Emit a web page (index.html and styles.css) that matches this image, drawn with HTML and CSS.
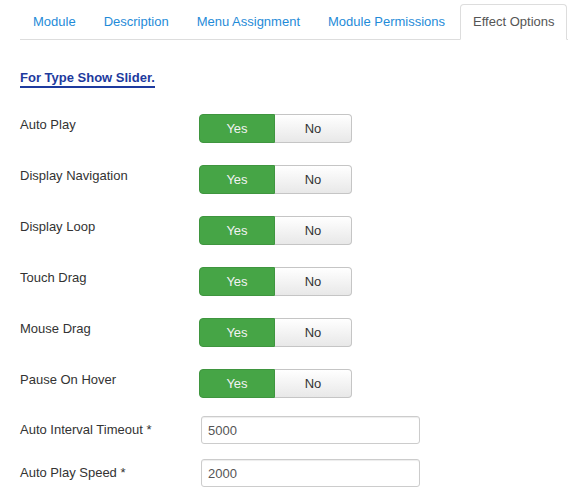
FILE: index.html
```
<!DOCTYPE html>
<html lang="en">
<head>
    <meta charset="UTF-8">
    <meta name="viewport" content="width=device-width, initial-scale=1.0">
    <title>Effect Options</title>
    <link rel="stylesheet" href="styles.css">
</head>
<body>
    <div class="container">
        <!-- Tabs -->
        <ul class="nav-tabs">
            <li><a href="#">Module</a></li>
            <li><a href="#">Description</a></li>
            <li><a href="#">Menu Assignment</a></li>
            <li><a href="#">Module Permissions</a></li>
            <li class="active"><a href="#">Effect Options</a></li>
        </ul>

        <h3 class="section-title">For Type Show Slider.</h3>

        <!-- Yes / No switches -->
        <div class="form">
            <div class="row radio-row">
                <label>Auto Play</label>
                <div class="btn-group"><span class="btn yes">Yes</span><span class="btn no">No</span></div>
            </div>
            <div class="row radio-row">
                <label>Display Navigation</label>
                <div class="btn-group"><span class="btn yes">Yes</span><span class="btn no">No</span></div>
            </div>
            <div class="row radio-row">
                <label>Display Loop</label>
                <div class="btn-group"><span class="btn yes">Yes</span><span class="btn no">No</span></div>
            </div>
            <div class="row radio-row">
                <label>Touch Drag</label>
                <div class="btn-group"><span class="btn yes">Yes</span><span class="btn no">No</span></div>
            </div>
            <div class="row radio-row">
                <label>Mouse Drag</label>
                <div class="btn-group"><span class="btn yes">Yes</span><span class="btn no">No</span></div>
            </div>
            <div class="row radio-row last">
                <label>Pause On Hover</label>
                <div class="btn-group"><span class="btn yes">Yes</span><span class="btn no">No</span></div>
            </div>

            <!-- Text inputs -->
            <div class="row input-row">
                <label>Auto Interval Timeout *</label>
                <input type="text" value="5000">
            </div>
            <div class="row input-row">
                <label>Auto Play Speed *</label>
                <input type="text" value="2000">
            </div>
        </div>
    </div>
</body>
</html>
```

FILE: styles.css
```
body {
    font-family: "Liberation Sans", Arial, sans-serif;
    font-size: 13px;
    color: #333;
    background-color: #fff;
    margin: 0;
    padding: 0;
}

.container {
    padding: 4px 0 0 20px;
}

/* Tabs */
.nav-tabs {
    list-style: none;
    margin: 0;
    padding: 0;
    display: flex;
    height: 35px;
    border-bottom: 1px solid #ddd;
}

.nav-tabs li {
    flex-shrink: 0;
    margin-right: 2px;
    margin-bottom: -1px;
}

.nav-tabs a {
    display: block;
    padding: 8px 12px;
    line-height: 18px;
    white-space: nowrap;
    border: 1px solid transparent;
    border-radius: 4px 4px 0 0;
    color: #1f8bd8;
    text-decoration: none;
}

.nav-tabs .active a {
    color: #555;
    background-color: #fff;
    border-color: #ddd #ddd transparent;
}

.section-title {
    display: inline-block;
    margin: 30px 0 0;
    font-size: 13px;
    font-weight: bold;
    line-height: 16px;
    color: #1d3a9e;
    border-bottom: 2px solid #1d3a9e;
}

.form {
    margin-top: 26px;
}

.row {
    display: flex;
    align-items: flex-start;
}

.row label {
    width: 179px;
    line-height: 18px;
}

.radio-row {
    margin-bottom: 22px;
}

.radio-row label {
    padding-top: 2px;
}

.radio-row.last {
    margin-bottom: 18px;
}

.input-row {
    margin-bottom: 15px;
}

.input-row label {
    padding-top: 5px;
}

/* Yes / No buttons */
.btn-group {
    display: flex;
}

.btn {
    display: block;
    width: 76px;
    box-sizing: border-box;
    text-align: center;
    padding: 4px 0;
    line-height: 19px;
    border: 1px solid #c5c5c5;
}

.btn.yes {
    color: #f2f2f2;
    background-color: #46a546;
    border-color: #3f953f;
    border-radius: 4px 0 0 4px;
}

.btn.no {
    width: 77px;
    color: #333;
    background: linear-gradient(#ffffff, #e8e8e8);
    border-left: none;
    border-radius: 0 4px 4px 0;
}

/* Text inputs */
input[type="text"] {
    margin-left: 2px;
    width: 219px;
    height: 28px;
    box-sizing: border-box;
    padding: 4px 6px;
    font-family: "Liberation Sans", Arial, sans-serif;
    font-size: 13px;
    line-height: 18px;
    color: #555;
    border: 1px solid #ccc;
    border-radius: 3px;
    box-shadow: inset 0 1px 1px rgba(0, 0, 0, 0.075);
}
```
